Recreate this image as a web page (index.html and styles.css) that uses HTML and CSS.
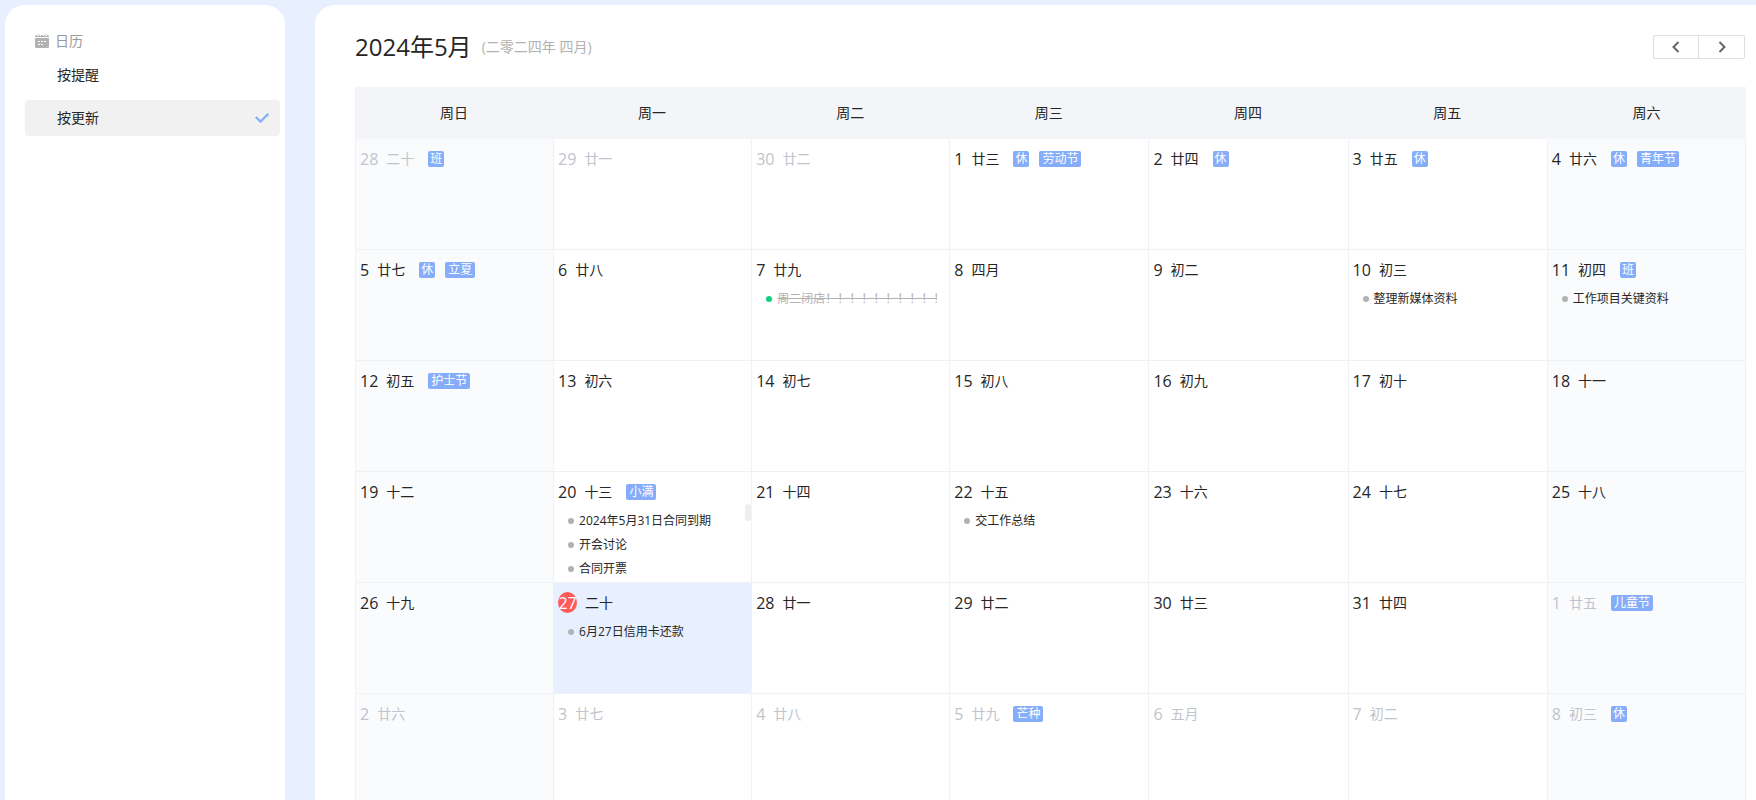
FILE: index.html
```
<!DOCTYPE html>
<html lang="zh-CN">
<head>
<meta charset="utf-8">
<title>日历</title>
<link rel="stylesheet" href="styles.css">
</head>
<body>
<div class="app">
  <nav class="sidebar">
    <h2 class="group">
      <svg class="group-icon" viewBox="0 0 14 14" aria-hidden="true">
        <path fill="#b2b2b2" fill-rule="evenodd" d="M0 4h14v8.500a1.500 1.500 0 0 1-1.500 1.500h-11A1.500 1.500 0 0 1 0 12.500zM3 7v1h2V7zM6 7v1h2V7zM9 7v1h2V7zM3 10v1h2v-1zM6 10v1h2v-1z"/>
        <path fill="#b2b2b2" d="M0 3V2.500A1.500 1.500 0 0 1 1.500 1H2v1h2V1h1v1h1V1h2v1h1V1h1v1h2V1h.5A1.500 1.500 0 0 1 14 2.500V3zM2.500 0h1v1h-1zM10.500 0h1v1h-1z"/>
      </svg>
      日历
    </h2>
    <ul class="views">
      <li><button class="view" type="button">按提醒</button></li>
      <li><button class="view view-active" type="button" aria-pressed="true">按更新
        <svg class="check" viewBox="0 0 14 10" aria-hidden="true"><path d="M.7 4 5.500 8.600 13.300.8" fill="none" stroke="#85adfa" stroke-width="2.200"/></svg>
      </button></li>
    </ul>
  </nav>
  <main class="main">
    <header class="toolbar">
      <h1 class="title">2024年5月</h1>
      <span class="subtitle">(二零二四年 四月)</span>
      <div class="pager">
        <button class="page-btn" type="button" aria-label="上个月"><svg class="arrow" viewBox="0 0 8 12" aria-hidden="true"><path d="M6.500 1 1.500 6l5 5"/></svg></button>
        <button class="page-btn" type="button" aria-label="下个月"><svg class="arrow" viewBox="0 0 8 12" aria-hidden="true"><path d="m1.500 1 5 5-5 5"/></svg></button>
      </div>
    </header>
    <table class="calendar">
      <thead>
        <tr><th>周日</th><th>周一</th><th>周二</th><th>周三</th><th>周四</th><th>周五</th><th>周六</th></tr>
      </thead>
      <tbody>
        <tr>
          <td class="other"><div class="date"><span class="num">28</span><span class="lunar">二十</span><span class="mark">班</span></div></td>
          <td class="other"><div class="date"><span class="num">29</span><span class="lunar">廿一</span></div></td>
          <td class="other"><div class="date"><span class="num">30</span><span class="lunar">廿二</span></div></td>
          <td><div class="date"><span class="num">1</span><span class="lunar">廿三</span><span class="mark">休</span><span class="mark fest">劳动节</span></div></td>
          <td><div class="date"><span class="num">2</span><span class="lunar">廿四</span><span class="mark">休</span></div></td>
          <td><div class="date"><span class="num">3</span><span class="lunar">廿五</span><span class="mark">休</span></div></td>
          <td><div class="date"><span class="num">4</span><span class="lunar">廿六</span><span class="mark">休</span><span class="mark fest">青年节</span></div></td>
        </tr>
        <tr>
          <td><div class="date"><span class="num">5</span><span class="lunar">廿七</span><span class="mark">休</span><span class="mark fest">立夏</span></div></td>
          <td><div class="date"><span class="num">6</span><span class="lunar">廿八</span></div></td>
          <td><div class="date"><span class="num">7</span><span class="lunar">廿九</span></div>
            <ul class="events"><li class="event done"><span class="label">周二闭店！！！！！！！！！！</span></li></ul></td>
          <td><div class="date"><span class="num">8</span><span class="lunar">四月</span></div></td>
          <td><div class="date"><span class="num">9</span><span class="lunar">初二</span></div></td>
          <td><div class="date"><span class="num">10</span><span class="lunar">初三</span></div>
            <ul class="events"><li class="event"><span class="label">整理新媒体资料</span></li></ul></td>
          <td><div class="date"><span class="num">11</span><span class="lunar">初四</span><span class="mark">班</span></div>
            <ul class="events"><li class="event"><span class="label">工作项目关键资料</span></li></ul></td>
        </tr>
        <tr>
          <td><div class="date"><span class="num">12</span><span class="lunar">初五</span><span class="mark fest">护士节</span></div></td>
          <td><div class="date"><span class="num">13</span><span class="lunar">初六</span></div></td>
          <td><div class="date"><span class="num">14</span><span class="lunar">初七</span></div></td>
          <td><div class="date"><span class="num">15</span><span class="lunar">初八</span></div></td>
          <td><div class="date"><span class="num">16</span><span class="lunar">初九</span></div></td>
          <td><div class="date"><span class="num">17</span><span class="lunar">初十</span></div></td>
          <td><div class="date"><span class="num">18</span><span class="lunar">十一</span></div></td>
        </tr>
        <tr>
          <td><div class="date"><span class="num">19</span><span class="lunar">十二</span></div></td>
          <td class="scrolling"><div class="date"><span class="num">20</span><span class="lunar">十三</span><span class="mark fest">小满</span></div>
            <ul class="events"><li class="event"><span class="label">2024年5月31日合同到期</span></li><li class="event"><span class="label">开会讨论</span></li><li class="event"><span class="label">合同开票</span></li></ul><span class="thumb"></span></td>
          <td><div class="date"><span class="num">21</span><span class="lunar">十四</span></div></td>
          <td><div class="date"><span class="num">22</span><span class="lunar">十五</span></div>
            <ul class="events"><li class="event"><span class="label">交工作总结</span></li></ul></td>
          <td><div class="date"><span class="num">23</span><span class="lunar">十六</span></div></td>
          <td><div class="date"><span class="num">24</span><span class="lunar">十七</span></div></td>
          <td><div class="date"><span class="num">25</span><span class="lunar">十八</span></div></td>
        </tr>
        <tr>
          <td><div class="date"><span class="num">26</span><span class="lunar">十九</span></div></td>
          <td class="today"><div class="date"><span class="num">27</span><span class="lunar">二十</span></div>
            <ul class="events"><li class="event"><span class="label">6月27日信用卡还款</span></li></ul></td>
          <td><div class="date"><span class="num">28</span><span class="lunar">廿一</span></div></td>
          <td><div class="date"><span class="num">29</span><span class="lunar">廿二</span></div></td>
          <td><div class="date"><span class="num">30</span><span class="lunar">廿三</span></div></td>
          <td><div class="date"><span class="num">31</span><span class="lunar">廿四</span></div></td>
          <td class="other"><div class="date"><span class="num">1</span><span class="lunar">廿五</span><span class="mark fest">儿童节</span></div></td>
        </tr>
        <tr>
          <td class="other"><div class="date"><span class="num">2</span><span class="lunar">廿六</span></div></td>
          <td class="other"><div class="date"><span class="num">3</span><span class="lunar">廿七</span></div></td>
          <td class="other"><div class="date"><span class="num">4</span><span class="lunar">廿八</span></div></td>
          <td class="other"><div class="date"><span class="num">5</span><span class="lunar">廿九</span><span class="mark fest">芒种</span></div></td>
          <td class="other"><div class="date"><span class="num">6</span><span class="lunar">五月</span></div></td>
          <td class="other"><div class="date"><span class="num">7</span><span class="lunar">初二</span></div></td>
          <td class="other"><div class="date"><span class="num">8</span><span class="lunar">初三</span><span class="mark">休</span></div></td>
        </tr>
      </tbody>
    </table>
  </main>
</div>
</body>
</html>
```
FILE: styles.css
```
* { box-sizing: border-box; }

body {
  margin: 0;
  background: #e8f0ff;
  color: #262626;
  font: 14px/20px "Open Sans", "Noto Sans", "Noto Sans CJK SC", sans-serif;
}

h1, h2, ul { margin: 0; padding: 0; font-weight: 400; list-style: none; }
button { font: inherit; color: inherit; border: 0; background: none; cursor: pointer; }

.app {
  display: flex;
  gap: 30px;
  height: 100vh;
  padding: 5px 0 0 5px;
  overflow: hidden;
}

.sidebar {
  flex: none;
  width: 280px;
  padding: 26px 5px 0 20px;
  border-radius: 20px 20px 0 0;
  background: #fff;
}

.group {
  display: flex;
  align-items: center;
  gap: 6px;
  padding-left: 10px;
  font-size: 14px;
  color: #999;
}
.group-icon { width: 14px; height: 14px; }

.views { display: grid; gap: 7px; padding-top: 6px; }
.view {
  display: flex;
  align-items: center;
  justify-content: space-between;
  width: 100%;
  height: 36px;
  padding: 0 11px 0 32px;
  border-radius: 4px;
}
.view-active { background: #f1f1f1; }
.check { width: 14px; height: 10px; }

.main {
  flex: 1;
  min-width: 0;
  padding: 22px 10px 0 40px;
  border-radius: 20px 0 0 0;
  background: #fff;
}

.toolbar { display: flex; align-items: center; gap: 10px; height: 40px; margin-bottom: 20px; }
.title { font-size: 24px; line-height: 40px; }
.subtitle { color: #b2b2b2; }
.pager { display: flex; margin-left: auto; padding-right: 1px; }
.page-btn {
  display: flex;
  align-items: center;
  justify-content: center;
  width: 46px;
  height: 24px;
  padding: 0;
  border: 1px solid #dcdee4;
  border-radius: 2px 0 0 2px;
}
.page-btn + .page-btn { width: 47px; margin-left: -1px; border-radius: 0 2px 2px 0; }
.arrow { width: 8px; height: 12px; fill: none; stroke: #666; stroke-width: 2; }

.calendar { width: 100%; table-layout: fixed; border-collapse: separate; border-spacing: 0; }
.calendar th { height: 52px; padding: 0; background: #f3f5f9; font-weight: 400; }
.calendar th:nth-child(-n+3) { width: 14.24%; }
.calendar td {
  height: 111px;
  padding: 9px 0 0 4px;
  vertical-align: top;
  border: solid #f0f1f3;
  border-width: 0 0 1px 1px;
}
.calendar td:last-child { border-right-width: 1px; }
.calendar td:first-child, .calendar td:last-child { background: #fafbfd; }
.calendar .today { background: #e8f0ff; }

.date { display: flex; align-items: center; height: 22px; }
.num { font-size: 16px; line-height: 22px; }
.lunar { margin: 0 4px 0 8px; }
.mark {
  margin-left: 10px;
  padding: 0 2px;
  border-radius: 2px;
  background: #85adfa;
  color: #fff;
  font-size: 12px;
  line-height: 16px;
}
.fest { padding: 0 3px; }
.other .num, .other .lunar { color: #c0c4cc; }
.today .num {
  display: flex;
  align-items: center;
  align-self: flex-start;
  justify-content: center;
  width: 19px;
  height: 21px;
  border-radius: 50%;
  background: #ff5a5a;
  color: #fff;
}

.events { padding: 6px 12px 0 10px; }
.event { display: flex; align-items: center; gap: 5px; height: 24px; font-size: 12px; }
.event::before { content: ""; flex: none; width: 6px; height: 6px; border-radius: 50%; background: #b2b2b2; }
.event.done { color: #b2b2b2; }
.event.done::before { background: #10d080; }
.label { overflow: hidden; white-space: nowrap; }
.done .label { text-decoration: line-through; }

.calendar .scrolling { position: relative; }
.thumb {
  position: absolute;
  top: 32px;
  right: 0;
  width: 6px;
  height: 17px;
  border-radius: 3px;
  background: #eee;
}
```
